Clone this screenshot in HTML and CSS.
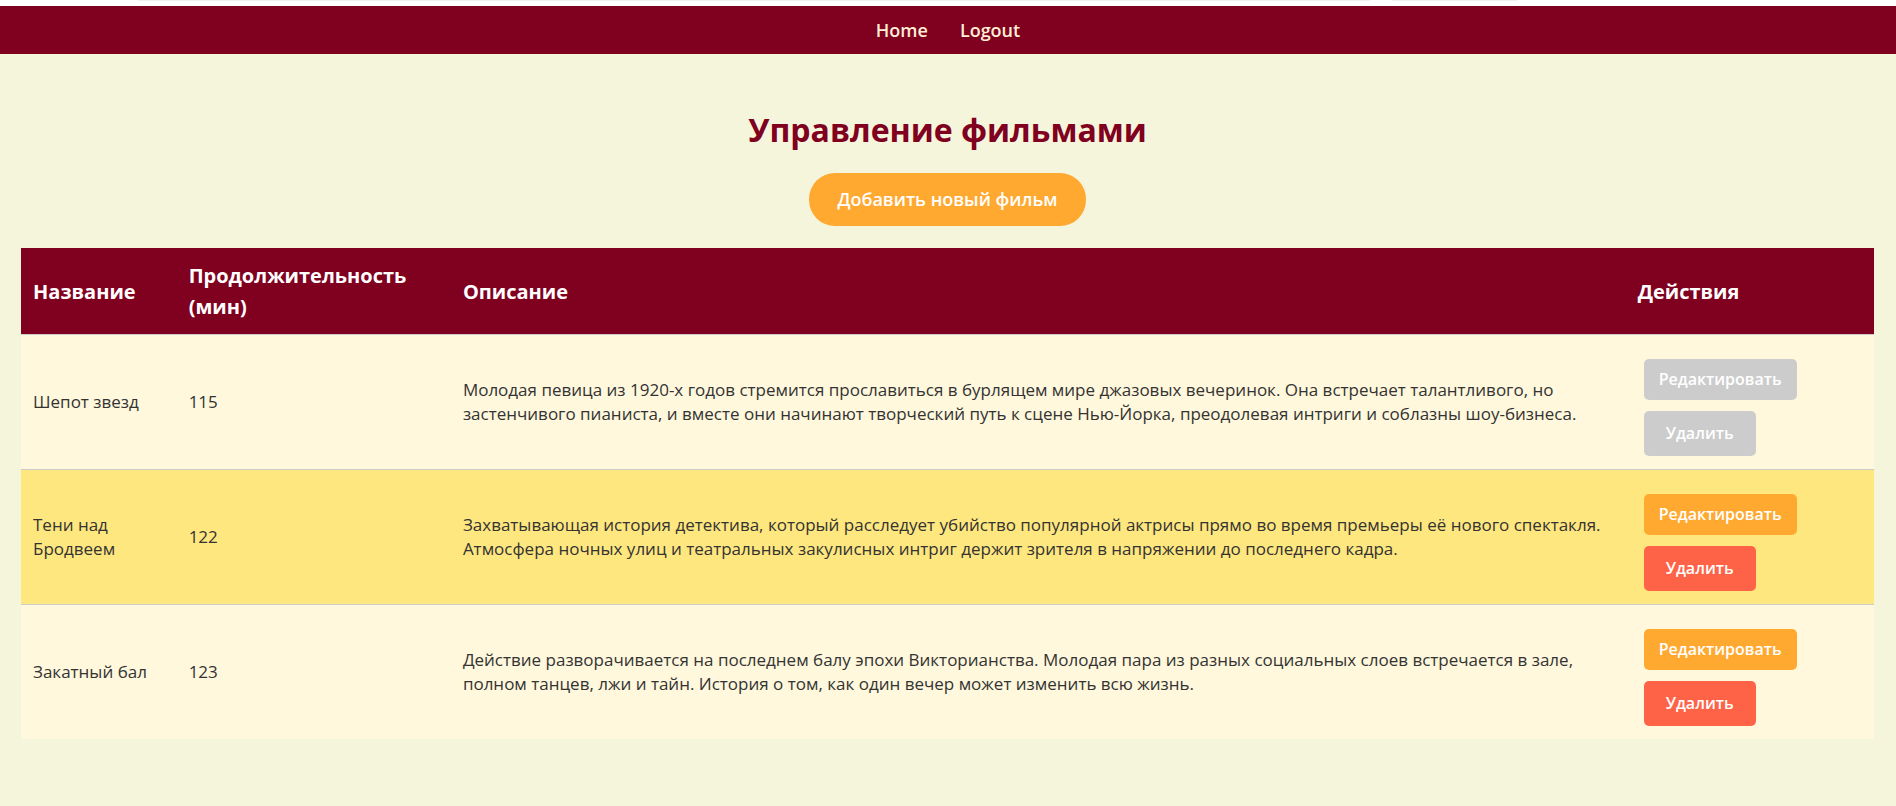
FILE: index.html
```html
<!DOCTYPE html>
<html lang="ru">
<head>
<meta charset="utf-8">
<title>Управление фильмами</title>
<link rel="stylesheet" href="styles.css">
</head>
<body>
<div class="top-strip"><span class="strip-main"></span><span class="strip-side"></span></div>
<nav class="nav">
  <a href="#">Home</a>
  <a href="#">Logout</a>
</nav>
<main class="page">
  <h1 class="title">Управление фильмами</h1>
  <button type="button" class="add">Добавить новый фильм</button>
  <table class="films">
    <colgroup><col class="c-name"><col class="c-time"><col class="c-desc"><col class="c-act"></colgroup>
    <thead>
      <tr><th>Название</th><th>Продолжительность (мин)</th><th>Описание</th><th>Действия</th></tr>
    </thead>
    <tbody>
      <tr>
        <td>Шепот звезд</td><td>115</td>
        <td>Молодая певица из 1920-х годов стремится прославиться в бурлящем мире джазовых вечеринок. Она встречает талантливого, но<br>застенчивого пианиста, и вместе они начинают творческий путь к сцене Нью-Йорка, преодолевая интриги и соблазны шоу-бизнеса.</td>
        <td><div class="actions"><button type="button" class="edit" disabled>Редактировать</button><button type="button" class="delete" disabled>Удалить</button></div></td>
      </tr>
      <tr class="active">
        <td>Тени над Бродвеем</td><td>122</td>
        <td>Захватывающая история детектива, который расследует убийство популярной актрисы прямо во время премьеры её нового спектакля.<br>Атмосфера ночных улиц и театральных закулисных интриг держит зрителя в напряжении до последнего кадра.</td>
        <td><div class="actions"><button type="button" class="edit">Редактировать</button><button type="button" class="delete">Удалить</button></div></td>
      </tr>
      <tr>
        <td>Закатный бал</td><td>123</td>
        <td>Действие разворачивается на последнем балу эпохи Викторианства. Молодая пара из разных социальных слоев встречается в зале,<br>полном танцев, лжи и тайн. История о том, как один вечер может изменить всю жизнь.</td>
        <td><div class="actions"><button type="button" class="edit">Редактировать</button><button type="button" class="delete">Удалить</button></div></td>
      </tr>
    </tbody>
  </table>
</main>
</body>
</html>
```
FILE: styles.css
```css
* { box-sizing: border-box; }

body {
  margin: 0;
  min-height: 100vh;
  background: #f5f5dc;
  color: #333;
  font-family: "Comic Sans MS", "Open Sans", sans-serif;
  font-size: 17px;
  line-height: 24px;
}

button { border: 0; color: #fff; font-family: inherit; cursor: pointer; }

.top-strip {
  display: flex;
  gap: 22px;
  height: 6px;
  padding: 0 20% 0 138px;
  background: #fff;
}

.strip-main, .strip-side { height: 1px; background: #f1f1f1; }
.strip-main { flex: 1; }
.strip-side { width: 125px; }

.nav {
  display: flex;
  justify-content: center;
  gap: 32px;
  padding: 12px;
  background: #800020;
}

.nav a { color: #ffefd5; font-size: 18px; font-weight: 600; text-decoration: none; }

.page {
  display: flex;
  flex-direction: column;
  align-items: center;
  padding: 48px 22px 64px 21px;
}

.title { margin: 0 0 16px; color: #800020; font-size: 32px; line-height: 55px; font-weight: 700; }

.add {
  margin-bottom: 22px;
  padding: 14px 28px;
  border-radius: 26px;
  background: #ffa931;
  font-size: 18px;
  line-height: 25px;
  font-weight: 600;
}

.films { width: 100%; table-layout: fixed; border-collapse: collapse; background: #fff8dc; }

.c-name { width: 8.4%; }
.c-time { width: 14.8%; }
.c-desc { width: 63.4%; }
.c-act { width: 13.4%; }

.films th, .films td { padding: 12px; text-align: left; vertical-align: middle; }
.films th { background: #800020; color: #fff; font-size: 20px; line-height: 31px; }
.films td { border-top: 1px solid #ccc; }
.films .active { background: #ffe77f; }

.actions { display: flex; flex-direction: column; align-items: flex-start; gap: 11px; padding: 12px 6px 1px; }

.edit, .delete { border-radius: 5px; font-size: 16px; font-weight: 600; line-height: 21px; }
.edit { padding: 10px 15px; background: #ffa931; }
.delete { padding: 12px 22px; background: #ff6347; }
.edit:disabled, .delete:disabled { background: #ccc; cursor: default; }
```
